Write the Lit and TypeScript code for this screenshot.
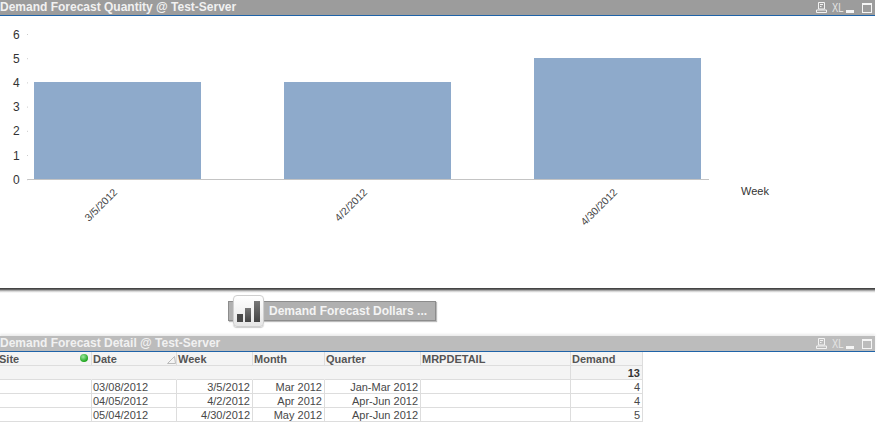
import { LitElement, html, css, svg } from "lit";
import { customElement } from "lit/decorators.js";

const icons = html`<div class="icons">
  <svg width="11" height="11" viewBox="0 0 11 11" class="ic"><path d="M2.5 .5h6v6.5h-6zM4 2.5h3M4 4.5h1.5M.5 10.5h10v-2.5h-10z" fill="none" stroke="#f2f2f2" stroke-width="1"/></svg>
  <span class="xl">XL</span>
  <span class="min"></span>
  <span class="max"></span>
</div>`;

@customElement("app-root")
export class AppRoot extends LitElement {
  static styles = css`
    :host { display: block; width: 884px; height: 429px; background: #fff; overflow: hidden; font-family: "Liberation Sans", Arial, sans-serif; }
    .page { width: 875px; display: flex; flex-direction: column; }
    .cap { height: 15px; display: flex; align-items: center; justify-content: space-between; border-bottom: 1px solid #1f63a8; color: #f1f1f1; font-weight: bold; font-size: 12px; white-space: nowrap; line-height: 15px; }
    .cap.a { background: #9c9c9c; }
    .cap.b { background: #bcbcbc; box-shadow: 0 -2px 2px #ececec; }
    .icons { display: flex; align-items: center; height: 15px; }
    .ic { margin-right: 5px; }
    .xl { width: 10px; margin-right: 4px; font-size: 13px; line-height: 13px; font-weight: normal; color: #e4e4e4; transform: scaleX(.72); transform-origin: left; white-space: nowrap; }
    .min { width: 8px; height: 3px; background: #f5f5f5; margin-top: 8px; margin-right: 8px; }
    .max { width: 10px; height: 10px; box-sizing: border-box; border: 1px solid #f5f5f5; border-top-width: 2px; margin-right: 3px; }
    .chart { height: 272px; }
    .chart svg { display: block; }
    .shadow { height: 5px; background: linear-gradient(#3a3a3a 0, #555 25%, #aaa 50%, #e4e4e4 75%, #fff 100%); }
    .tick { font-size: 12px; fill: #333; }
    .lab { font-size: 10.5px; fill: #444; }
    .week { font-size: 11px; fill: #333; }
    .mid { height: 43px; padding-left: 228px; padding-top: 2px; box-sizing: border-box; }
    .btn { position: relative; width: 208px; height: 32px; display: flex; align-items: center; }
    .bar { width: 208px; height: 20px; background: #b0b0b0; border: 1px solid #8c8c8c; box-shadow: 1px 1px 1px #bbb; box-sizing: border-box; color: #f4f4f4; font-weight: bold; font-size: 12px; line-height: 18px; padding-left: 40px; white-space: nowrap; }
    .tile { position: absolute; left: 5px; top: 0; width: 31px; height: 32px; background: linear-gradient(#fff, #e6e6e6); border: 1px solid #cfcfcf; border-radius: 4px; box-sizing: border-box; box-shadow: 0 1px 1px #ccc; display: flex; align-items: center; justify-content: center; }
    .grid { display: grid; grid-template-columns: 92px 85px 76px 72px 96px 150px 72px; width: 643px; font-size: 11px; color: #484848; }
    .grid > div { height: 14px; line-height: 15px; box-sizing: border-box; border-right: 1px solid #ddd; border-bottom: 1px solid #ddd; padding: 0 2px 0 1px; white-space: nowrap; overflow: hidden; }
    .h { background: #f4f4f4; font-weight: bold; color: #555; position: relative; }
    .t { background: #f4f4f4; }
    .r { text-align: right; }
    .nob { border-right-color: transparent !important; }
    .strong { font-weight: bold; color: #333; }
    .first { padding-left: 0 !important; text-indent: -1px; }
    .dot { position: absolute; right: 3px; top: 2px; width: 8px; height: 8px; border-radius: 50%; background: radial-gradient(circle at 40% 35%, #9fe89f, #1da51d 70%); }
    .sort { position: absolute; right: 0; top: 4px; }
  `;

  render() {
    const bars = [[34, 82, 97], [284, 82, 97], [534, 58, 121]];
    const ticks = [6, 5, 4, 3, 2, 1, 0];
    const xs = [["3/5/2012", 118, 193], ["4/2/2012", 368, 193], ["4/30/2012", 618, 193]] as const;
    const rows = [
      ["03/08/2012", "3/5/2012", "Mar 2012", "Jan-Mar 2012", "4"],
      ["04/05/2012", "4/2/2012", "Apr 2012", "Apr-Jun 2012", "4"],
      ["05/04/2012", "4/30/2012", "May 2012", "Apr-Jun 2012", "5"],
    ];
    return html`<div class="page">
      <div class="cap a"><span>Demand Forecast Quantity @ Test-Server</span>${icons}</div>
      <div class="chart">
        <svg width="875" height="272" viewBox="0 16 875 272">
          ${bars.map(([x, y, h]) => svg`<rect x=${x} y=${y} width="167" height=${h} fill="#8eaacb"></rect>`)}
          <rect x="27" y="179" width="682" height="1" fill="#c4c4c4"></rect>
          ${ticks.map((t, i) => svg`<rect x="27" y=${34 + i * 24.2} width="1" height="1" fill="#ccc"></rect>
            <text class="tick" x="13" y=${39 + i * 24.1}>${t}</text>`)}
          ${xs.map(([s, x, y]) => svg`<text class="lab" text-anchor="end" transform="translate(${x} ${y}) rotate(-45)">${s}</text>`)}
          <text class="week" x="741" y="195">Week</text>
        </svg>
      </div>
      <div class="shadow"></div>
      <div class="mid">
        <div class="btn">
          <div class="bar">Demand Forecast Dollars ...</div>
          <div class="tile">
            <svg width="23" height="21" viewBox="0 0 23 21">
              <defs><linearGradient id="g" x1="0" y1="0" x2="0" y2="1"><stop offset="0" stop-color="#777"></stop><stop offset="1" stop-color="#444"></stop></linearGradient></defs>
              <rect x="0" y="13" width="6" height="8" fill="#4a4a4a"></rect><rect x="8" y="7" width="6" height="14" fill="url(#g)"></rect><rect x="17" y="0" width="6" height="21" fill="url(#g)"></rect>
            </svg>
          </div>
        </div>
      </div>
      <div class="cap b"><span>Demand Forecast Detail @ Test-Server</span>${icons}</div>
      <div class="grid">
        <div class="h first">Site<span class="dot"></span></div>
        <div class="h">Date<svg class="sort" width="9" height="8" viewBox="0 0 9 8"><path d="M.5 7.5h8L7.5 .5z" fill="none" stroke="#bbb"/></svg></div>
        <div class="h">Week</div><div class="h">Month</div><div class="h">Quarter</div><div class="h">MRPDETAIL</div><div class="h">Demand</div>
        <div class="t nob"></div><div class="t nob"></div><div class="t nob"></div><div class="t nob"></div><div class="t nob"></div><div class="t"></div>
        <div class="t r strong">13</div>
        ${rows.map((r) => html`<div></div><div>${r[0]}</div><div class="r">${r[1]}</div><div class="r">${r[2]}</div><div class="r">${r[3]}</div><div></div><div class="r">${r[4]}</div>`)}
      </div>
    </div>`;
  }
}
